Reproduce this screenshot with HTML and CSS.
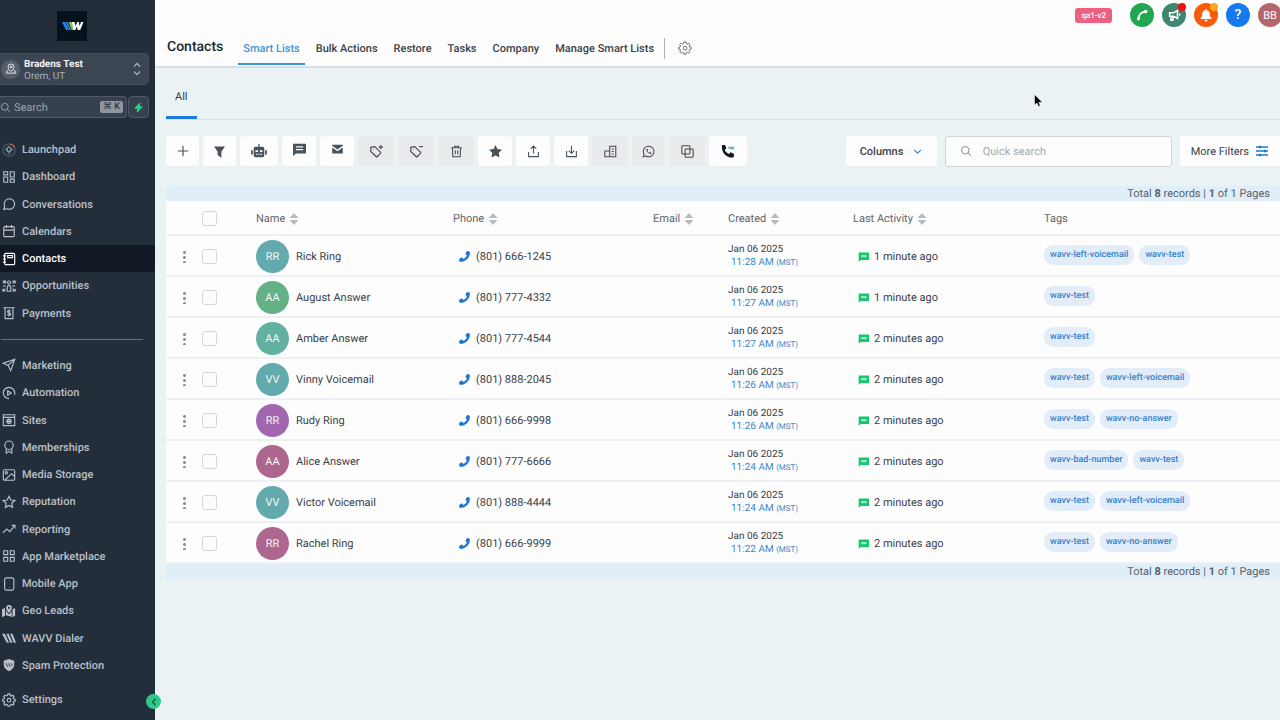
FILE: index.html
```html
<!DOCTYPE html>
<html lang="en">
<head>
<meta charset="utf-8">
<title>Contacts</title>
<link rel="stylesheet" href="styles.css">
</head>
<body>
<svg class="sprite" aria-hidden="true">
  <symbol id="launch" viewBox="0 0 16 16"><circle cx="8" cy="8" r="7" stroke="#4d5b6c"/><path d="M9 1.1A7 7 0 0 1 14.6 5.600" stroke="#c4634a"/><path d="M8 4 4.500 7.500h1.700v2h3.600v-2h1.700zM6.500 11.500h3" stroke="#7f93a8"/></symbol>
  <symbol id="dash" viewBox="0 0 16 16"><path d="M2 2h4.500v3.500H2zM2 8h4.500v6H2zM9.500 2H14v6H9.500zM9.500 10.500H14V14H9.500z"/></symbol>
  <symbol id="chat" viewBox="0 0 16 16"><path d="M8.500 2a6 6 0 1 1-2.700 11.400L2 14.200l1.100-3.600A6 6 0 0 1 8.500 2z"/></symbol>
  <symbol id="cal" viewBox="0 0 16 16"><rect x="2" y="3" width="12" height="11.500" rx="1.500"/><path d="M2 7h12M5 1v3.500M11 1v3.500"/></symbol>
  <symbol id="book" viewBox="0 0 16 16"><rect x="3" y="1.500" width="11.500" height="13" rx="1.500"/><path d="M1 4.500h3.500M1 8h3.500M1 11.500h3.500M6.500 4h5.500v2.500H6.500z"/></symbol>
  <symbol id="people" viewBox="0 0 16 16"><circle cx="8" cy="4" r="1.700"/><path d="M6 14V9.500a2 2 0 0 1 4 0V14zM1 2.500h3v2.500M1 5l3-2.500M15 5V2.500h-3M15 2.500 12 5M1 11v2.500h3M1 13.500 4 11M15 11v2.500h-3M15 13.500 12 11M1 8h3.500M11.500 8H15"/></symbol>
  <symbol id="pay" viewBox="0 0 16 16"><path d="M1.500 2h13M3.500 2v12.500h9V2M9.800 6c-.6-1-3.500-1-3.500.5 0 1.800 3.600 1 3.600 2.800 0 1.400-2.800 1.600-3.800.3M8 4v8"/></symbol>
  <symbol id="send" viewBox="0 0 16 16"><path d="M14.500 1.500 1.500 6l5.500 2.500L10 14.500zM14.500 1.500 7 8.500"/></symbol>
  <symbol id="auto" viewBox="0 0 16 16"><path d="M14.500 8A6.500 6.500 0 1 0 8 14.500M6.500 5.500v5l4-2.500zM14.500 8v2"/></symbol>
  <symbol id="site" viewBox="0 0 16 16"><path d="M1.500 2h13v12.500h-13zM1.500 5h13M5.500 9.500h5M8 7v5"/><circle cx="8" cy="9.500" r="2.500"/></symbol>
  <symbol id="badge" viewBox="0 0 16 16"><circle cx="8" cy="6" r="4.800"/><path d="M4.800 9.600V15L8 13l3.200 2V9.600"/></symbol>
  <symbol id="image" viewBox="0 0 16 16"><rect x="1.500" y="2" width="13" height="12" rx="1.500"/><circle cx="5" cy="5.500" r="1.300"/><path d="m3 14 8-7.500 3.500 3.500"/></symbol>
  <symbol id="star" viewBox="0 0 16 16"><path d="m8 1.500 2 4.200 4.600.6-3.400 3.200.9 4.600L8 11.900l-4.100 2.200.9-4.600L1.400 6.300 6 5.700z"/></symbol>
  <symbol id="trend" viewBox="0 0 16 16"><path d="m1 12.500 4.500-4.500 3.500 3L14.500 4M11 3.800h3.800V7.500"/></symbol>
  <symbol id="grid" viewBox="0 0 16 16"><path d="M2 2h4.500v4.500H2zM9.500 2H14v4.500H9.500zM2 9.500h4.500V14H2zM9.500 9.500H14V14H9.500z"/></symbol>
  <symbol id="mobile" viewBox="0 0 16 16"><rect x="3" y="1" width="10.500" height="14" rx="1.800"/><path d="M8 12h.6"/></symbol>
  <symbol id="geo" viewBox="0 0 16 16"><path stroke="none" fill="currentColor" d="m0 6 3.500-1.500v9L0 15zM4.500 7l2.800 4.500h1.400L11 8v6.500l-6.500-1.700zM12 6l3-1.500v9L12 15zM8 1a3.300 3.300 0 0 0-3.300 3.300C4.700 6.500 8 10.500 8 10.500s3.300-4 3.300-6.200A3.300 3.300 0 0 0 8 1zm0 2a1.300 1.300 0 1 1 0 2.600A1.300 1.300 0 0 1 8 3z"/></symbol>
  <symbol id="wavv" viewBox="0 0 16 16"><path stroke="none" fill="currentColor" d="M0 3h3.300L8 13.500H5.500zM5 3h2.600L12 13.500H9.500zM9.300 3H12l4 10.500h-2.500z"/></symbol>
  <symbol id="shield" viewBox="0 0 16 16"><path stroke="none" fill="currentColor" d="m8 1 6 2v4.500c0 3.500-2.500 6-6 7.500-3.500-1.500-6-4-6-7.500V3z"/><path d="m4.500 6 2 4M7.500 6l2 4M10.500 6l1.300 2.600" stroke="#4a5563"/></symbol>
  <symbol id="gear" viewBox="0 0 16 16"><path d="m6.800 1-.4 1.800-1.300.6-1.600-1L1.900 4l1 1.600-.5 1.200L.8 7.200v2l1.700.4.5 1.200-1 1.600 1.500 1.500 1.600-1 1.300.6.400 1.700h2.200l.4-1.700 1.300-.6 1.600 1 1.500-1.500-1-1.600.5-1.200 1.800-.4v-2l-1.800-.4-.5-1.200 1-1.600-1.500-1.500-1.600 1-1.300-.6L9 1z"/><circle cx="8" cy="8.200" r="2.100"/></symbol>
  <symbol id="search" viewBox="0 0 16 16"><circle cx="7" cy="7" r="5"/><path d="m10.800 10.800 4 4"/></symbol>
  <symbol id="pin" viewBox="0 0 16 16"><path d="M8 11.500S4 8.300 4 5.300a4 4 0 0 1 8 0c0 3-4 6.200-4 6.200zM4.500 10 2 11v2.500h12V11l-2.500-1"/><circle cx="8" cy="5.300" r="1.300"/></symbol>
  <symbol id="phone" viewBox="0 0 16 16"><path stroke="currentColor" stroke-width=".8" fill="currentColor" d="M15.200 1.200 12.300.5c-.4-.1-.7.100-.9.400L9.900 4c-.1.300 0 .7.200.9L12 6.400A11.600 11.600 0 0 1 6.400 12l-1.600-1.900c-.2-.3-.6-.4-.9-.2L.8 11.400c-.3.100-.5.500-.4.900l.8 2.800c.1.300.4.500.7.500A13.500 13.500 0 0 0 15.600 1.900c0-.3-.1-.6-.4-.7z"/></symbol>
  <symbol id="message" viewBox="0 0 16 16"><path stroke="none" fill="currentColor" fill-rule="evenodd" d="M0 1h16v12H3.500L0 16zM3.500 4v1.500h9V4zM3.500 7.500V9h9V7.500z"/></symbol>
  <symbol id="note" viewBox="0 0 16 16"><path stroke="none" fill="#17c671" d="M1 2h15v11H4l-3 2.500z"/><path d="M4.500 6h8v3h-8z" stroke="none" fill="#a4ecc8"/></symbol>
  <symbol id="sort" viewBox="0 0 10 12"><path stroke="none" fill="#b9bcbf" d="M5 0 9.500 5h-9zM5 12 .5 7h9z"/></symbol>
  <symbol id="tag" viewBox="0 0 16 16"><path d="M2 4.500Q1.500 4 2.200 3.800L6.500 3l6.600 6.300q.7.700 0 1.400l-3.600 3.600q-.7.700-1.400 0L2 8.500zM4.700 6.300h.6"/></symbol>
  <symbol id="chev" viewBox="0 0 16 16"><path d="m2 5 6 6 6-6"/></symbol>
</svg>
<div class="app">
  <aside class="sidebar">
    <div class="brand"><svg viewBox="0 0 30 30" role="img" aria-label="WAVV"><path fill="#2f7fe6" d="M5 11h3l4 8H9zM8.500 11h2l4 8h-2z"/><path fill="#7ac943" d="M11.500 11h2.800l3.200 8h-2.700z"/><path fill="#fff" d="M14.500 11h3l1.200 4 1.500-4h1.600l.8 4 1.400-4h2.500l-3.300 8h-2.500l-.9-3.500-1.500 3.500h-1.500z"/></svg></div>
    <button class="account"><span class="place"><svg class="i"><use href="#pin"/></svg></span><span class="who"><b>Bradens Test</b><span>Orem, UT</span></span><svg class="updown" viewBox="0 0 8 14"><path d="m1 4.500 3-3 3 3M1 9.500l3 3 3-3"/></svg></button>
    <div class="find">
      <label class="find-box"><svg class="i"><use href="#search"/></svg><input type="text" placeholder="Search" aria-label="Search"><kbd>⌘ K</kbd></label>
      <button class="bolt" aria-label="Quick actions"><svg viewBox="0 0 10 10"><path d="M6.500 0 .8 5.800h3.400L3.500 10l5.700-5.800H5.800z" fill="#2ecf8b" stroke="#2ecf8b"/></svg></button>
    </div>
    <nav class="menu primary">
      <a href="#"><svg class="i"><use href="#launch"/></svg>Launchpad</a>
      <a href="#"><svg class="i"><use href="#dash"/></svg>Dashboard</a>
      <a href="#"><svg class="i"><use href="#chat"/></svg>Conversations</a>
      <a href="#"><svg class="i"><use href="#cal"/></svg>Calendars</a>
      <a href="#" class="active"><svg class="i"><use href="#book"/></svg>Contacts</a>
      <a href="#"><svg class="i"><use href="#people"/></svg>Opportunities</a>
      <a href="#"><svg class="i"><use href="#pay"/></svg>Payments</a>
    </nav>
    <hr>
    <nav class="menu secondary">
      <a href="#"><svg class="i"><use href="#send"/></svg>Marketing</a>
      <a href="#"><svg class="i"><use href="#auto"/></svg>Automation</a>
      <a href="#"><svg class="i"><use href="#site"/></svg>Sites</a>
      <a href="#"><svg class="i"><use href="#badge"/></svg>Memberships</a>
      <a href="#"><svg class="i"><use href="#image"/></svg>Media Storage</a>
      <a href="#"><svg class="i"><use href="#star"/></svg>Reputation</a>
      <a href="#"><svg class="i"><use href="#trend"/></svg>Reporting</a>
      <a href="#"><svg class="i"><use href="#grid"/></svg>App Marketplace</a>
      <a href="#"><svg class="i"><use href="#mobile"/></svg>Mobile App</a>
      <a href="#"><svg class="i"><use href="#geo"/></svg>Geo Leads</a>
      <a href="#"><svg class="i"><use href="#wavv"/></svg>WAVV Dialer</a>
      <a href="#"><svg class="i"><use href="#shield"/></svg>Spam Protection</a>
    </nav>
    <nav class="menu settings"><a href="#"><svg class="i"><use href="#gear"/></svg>Settings</a></nav>
    <button class="collapse" aria-label="Collapse sidebar"><svg viewBox="0 0 8 8"><path d="M5.500 1 2.500 4l3 3"/></svg></button>
  </aside>
  <main>
    <header class="top">
      <div class="status">
        <span class="env">qa1-v2</span>
        <button class="round call" aria-label="Call"><svg viewBox="0 0 16 16"><path fill="none" stroke="#fff" stroke-width="2" d="M4 12.500C4 7.500 7.500 4 12.500 4"/><path fill="#fff" d="M2.300 10.500h3.400l-.2 3.300-2 .5-1.300-1zM10.500 2.200l3.300.3.500 1.600-.7 1.600-3.100.2z"/></svg></button>
        <button class="round news" aria-label="Announcements"><svg viewBox="0 0 16 16"><path fill="none" stroke="#fff" stroke-width="1.800" d="M3 5.500h4.500L12 3v9L7.500 9.500H3zM4.500 10v4h2.300v-4M14.500 6.500v2"/></svg><i class="dot red"></i></button>
        <button class="round bell" aria-label="Notifications"><svg viewBox="0 0 16 16"><path fill="#fff" d="M8 1.500c.7 0 1.200.5 1.200 1.100 2.200.5 3.200 2.300 3.200 4.400 0 2.500.8 3.500 1.800 4.500v1H1.800v-1c1-1 1.800-2 1.800-4.500 0-2.100 1-3.900 3.200-4.400 0-.6.500-1.100 1.200-1.100zM6.200 13.500h3.600a1.800 1.800 0 0 1-3.600 0z"/></svg><i class="dot amber"></i></button>
        <button class="round help" aria-label="Help">?</button>
        <button class="round me">BB</button>
      </div>
      <div class="titles">
        <h1>Contacts</h1>
        <nav class="sections"><a href="#" class="on">Smart Lists</a><a href="#">Bulk Actions</a><a href="#">Restore</a><a href="#">Tasks</a><a href="#">Company</a><a href="#">Manage Smart Lists</a></nav>
        <button class="cog" aria-label="Contact settings"><svg class="i"><use href="#gear"/></svg></button>
      </div>
    </header>
    <div class="content">
      <nav class="lists"><a href="#">All</a></nav>
      <div class="bar">
        <div class="tools">
          <button aria-label="Add contact"><svg class="i" viewBox="0 0 16 16"><path d="M8 2v12M2 8h12"/></svg></button>
          <button aria-label="Pipeline change"><svg class="i small" viewBox="0 0 16 16"><path fill="currentColor" d="M2.500 2.500h11L9.700 8v6.500L6.300 12V8z"/></svg></button>
          <button class="wide" aria-label="Add to automation"><svg class="robot" viewBox="0 0 18 16"><path fill="currentColor" fill-rule="evenodd" d="M8.300 0h1.400v3H13q2 0 2 2v8q0 2-2 2H5q-2 0-2-2V5q0-2 2-2h3.300zM5 7v2h3V7zm5 0v2h3V7zm-4.500 4.200v1.500H7v-1.500zm2.800 0v1.500h1.500v-1.500zm2.700 0v1.500h1.500v-1.500zM0 7h2v5H1q-1 0-1-1zM16 7h2v4q0 1-1 1h-1z"/></svg></button>
          <button class="mid raised" aria-label="Send SMS"><svg class="i small" viewBox="0 0 16 16"><use href="#message"/></svg></button>
          <button class="mid raised" aria-label="Send email"><svg class="i small" viewBox="0 0 16 16"><path fill="currentColor" stroke="none" d="M1.500 2h13v1.500L8 8 1.500 3.500zM1.500 5.500 8 10l6.500-4.500V13h-13z"/></svg></button>
          <button class="off" aria-label="Add tag"><svg class="i" viewBox="0 0 16 16"><use href="#tag"/><path d="M13.500 1v5M11 3.500h5"/></svg></button>
          <button class="off" aria-label="Remove tag"><svg class="i" viewBox="0 0 16 16"><use href="#tag"/><path d="M11.500 3h4.500"/></svg></button>
          <button class="off" aria-label="Delete"><svg class="i small" viewBox="0 0 16 16"><path d="M1.500 3.500h13M3 3.500l.5 11h9l.5-11M5.500 3.500V1.500h5v2M6.500 6.500v5M9.500 6.500v5"/></svg></button>
          <button class="mid" aria-label="Send review request"><svg class="i small filled" viewBox="0 0 16 16"><use href="#star"/></svg></button>
          <button class="mid" aria-label="Export"><svg class="i small" viewBox="0 0 16 16"><path d="M2 8.500v5.800h12V8.500M8 10.500v-9M4.500 4.800 8 1.300l3.500 3.500"/></svg></button>
          <button class="mid" aria-label="Import"><svg class="i small" viewBox="0 0 16 16"><path d="M2 7.500v6.800h12V7.500M8 1v9M4.500 6.800 8 10.300l3.500-3.500"/></svg></button>
          <button class="off" aria-label="Add to company"><svg class="i small" viewBox="0 0 16 16"><path d="M1 7.500h6v7H1zM7 14.500v-13h7.500v13zM9.500 5h2.500M9.500 8h2.500M9.500 11h2.500"/></svg></button>
          <button class="off plain" aria-label="WhatsApp"><svg class="i small" viewBox="0 0 16 16"><path d="M8.200 1.500a6.500 6.500 0 1 1-3.300 12.100L1.500 14.500l1-3.300A6.500 6.500 0 0 1 8.200 1.500z"/><path d="M5.500 5c-1 2.500 3 6.500 5.500 6l.5-1.500-1.700-.8-.8.800c-1-.3-1.800-1.300-2.200-2.200l.8-.8-.7-1.600z" fill="currentColor" stroke="none"/></svg></button>
          <button class="off" aria-label="Merge"><svg class="i small" viewBox="0 0 16 16"><rect x="1" y="1" width="10" height="10" rx="1"/><rect x="5" y="5" width="10" height="10" rx="1"/></svg></button>
          <button class="wide" aria-label="Call with WAVV"><svg class="i" viewBox="0 0 16 16"><path fill="#111a22" stroke="none" d="M1.500 1h3.200l1.500 4-2 1.500c1 2.300 2.700 4 5 5l1.500-2 4 1.500v3.500q-.5 1-2 1C6 15.500 1 10 1 3q0-1.500.5-2z"/><path stroke="none" fill="#62b7b4" d="M7.500 3H15v4l-2-1.500-1 1-1.500-1.500-1 1z"/></svg></button>
        </div>
        <label class="columns"><select aria-label="Columns"><option>Columns</option></select><svg class="i"><use href="#chev"/></svg></label>
        <label class="quick"><svg class="i"><use href="#search"/></svg><input type="text" placeholder="Quick search" aria-label="Quick search"></label>
        <button class="filters">More Filters<svg viewBox="0 0 14 12"><path d="M1 2h12M1 6h12M1 10h12"/><path class="knob" d="M5 .7v2.600M10 4.700v2.600M5 8.700v2.600"/></svg></button>
      </div>
      <section class="records">
        <p class="total">Total <b>8</b> records | <b>1</b> of 1 Pages</p>
        <table>
          <colgroup><col class="c-menu"><col class="c-check"><col class="c-name"><col class="c-phone"><col class="c-email"><col class="c-created"><col class="c-activity"><col></colgroup>
          <thead><tr><th></th><th><input type="checkbox" aria-label="Select all"></th><th><div class="head">Name<svg class="sort"><use href="#sort"/></svg></div></th><th><div class="head">Phone<svg class="sort"><use href="#sort"/></svg></div></th><th><div class="head">Email<svg class="sort"><use href="#sort"/></svg></div></th><th><div class="head">Created<svg class="sort"><use href="#sort"/></svg></div></th><th><div class="head">Last Activity<svg class="sort"><use href="#sort"/></svg></div></th><th>Tags</th></tr></thead>
          <tbody>
            <tr><td><button class="more" aria-label="Row actions"></button></td><td><input type="checkbox" aria-label="Select Rick Ring"></td><td><div class="person"><span class="avatar teal">RR</span>Rick Ring</div></td><td><div class="tel"><svg class="i"><use href="#phone"/></svg>(801) 666-1245</div></td><td></td><td><div class="date">Jan 06 2025</div><div class="time">11:28 AM <small>(MST)</small></div></td><td><div class="act"><svg class="i"><use href="#note"/></svg>1 minute ago</div></td><td><div class="tags"><span>wavv-left-voicemail</span><span>wavv-test</span></div></td></tr>
            <tr><td><button class="more" aria-label="Row actions"></button></td><td><input type="checkbox" aria-label="Select August Answer"></td><td><div class="person"><span class="avatar green">AA</span>August Answer</div></td><td><div class="tel"><svg class="i"><use href="#phone"/></svg>(801) 777-4332</div></td><td></td><td><div class="date">Jan 06 2025</div><div class="time">11:27 AM <small>(MST)</small></div></td><td><div class="act"><svg class="i"><use href="#note"/></svg>1 minute ago</div></td><td><div class="tags"><span>wavv-test</span></div></td></tr>
            <tr><td><button class="more" aria-label="Row actions"></button></td><td><input type="checkbox" aria-label="Select Amber Answer"></td><td><div class="person"><span class="avatar mint">AA</span>Amber Answer</div></td><td><div class="tel"><svg class="i"><use href="#phone"/></svg>(801) 777-4544</div></td><td></td><td><div class="date">Jan 06 2025</div><div class="time">11:27 AM <small>(MST)</small></div></td><td><div class="act"><svg class="i"><use href="#note"/></svg>2 minutes ago</div></td><td><div class="tags"><span>wavv-test</span></div></td></tr>
            <tr><td><button class="more" aria-label="Row actions"></button></td><td><input type="checkbox" aria-label="Select Vinny Voicemail"></td><td><div class="person"><span class="avatar teal">VV</span>Vinny Voicemail</div></td><td><div class="tel"><svg class="i"><use href="#phone"/></svg>(801) 888-2045</div></td><td></td><td><div class="date">Jan 06 2025</div><div class="time">11:26 AM <small>(MST)</small></div></td><td><div class="act"><svg class="i"><use href="#note"/></svg>2 minutes ago</div></td><td><div class="tags"><span>wavv-test</span><span>wavv-left-voicemail</span></div></td></tr>
            <tr><td><button class="more" aria-label="Row actions"></button></td><td><input type="checkbox" aria-label="Select Rudy Ring"></td><td><div class="person"><span class="avatar purple">RR</span>Rudy Ring</div></td><td><div class="tel"><svg class="i"><use href="#phone"/></svg>(801) 666-9998</div></td><td></td><td><div class="date">Jan 06 2025</div><div class="time">11:26 AM <small>(MST)</small></div></td><td><div class="act"><svg class="i"><use href="#note"/></svg>2 minutes ago</div></td><td><div class="tags"><span>wavv-test</span><span>wavv-no-answer</span></div></td></tr>
            <tr><td><button class="more" aria-label="Row actions"></button></td><td><input type="checkbox" aria-label="Select Alice Answer"></td><td><div class="person"><span class="avatar rose">AA</span>Alice Answer</div></td><td><div class="tel"><svg class="i"><use href="#phone"/></svg>(801) 777-6666</div></td><td></td><td><div class="date">Jan 06 2025</div><div class="time">11:24 AM <small>(MST)</small></div></td><td><div class="act"><svg class="i"><use href="#note"/></svg>2 minutes ago</div></td><td><div class="tags"><span>wavv-bad-number</span><span>wavv-test</span></div></td></tr>
            <tr><td><button class="more" aria-label="Row actions"></button></td><td><input type="checkbox" aria-label="Select Victor Voicemail"></td><td><div class="person"><span class="avatar teal">VV</span>Victor Voicemail</div></td><td><div class="tel"><svg class="i"><use href="#phone"/></svg>(801) 888-4444</div></td><td></td><td><div class="date">Jan 06 2025</div><div class="time">11:24 AM <small>(MST)</small></div></td><td><div class="act"><svg class="i"><use href="#note"/></svg>2 minutes ago</div></td><td><div class="tags"><span>wavv-test</span><span>wavv-left-voicemail</span></div></td></tr>
            <tr><td><button class="more" aria-label="Row actions"></button></td><td><input type="checkbox" aria-label="Select Rachel Ring"></td><td><div class="person"><span class="avatar rose">RR</span>Rachel Ring</div></td><td><div class="tel"><svg class="i"><use href="#phone"/></svg>(801) 666-9999</div></td><td></td><td><div class="date">Jan 06 2025</div><div class="time">11:22 AM <small>(MST)</small></div></td><td><div class="act"><svg class="i"><use href="#note"/></svg>2 minutes ago</div></td><td><div class="tags"><span>wavv-test</span><span>wavv-no-answer</span></div></td></tr>
          </tbody>
        </table>
        <p class="total">Total <b>8</b> records | <b>1</b> of 1 Pages</p>
      </section>
    </div>
  </main>
</div>
<svg class="pointer" viewBox="0 0 9 14" aria-hidden="true"><path d="M.5.500v10.500L3 9l1.500 3.500 1.700-.8L4.800 8.300h3.500z" fill="#000" stroke="#fff" stroke-width=".5"/></svg>
</body>
</html>
```
FILE: styles.css
```css
* { box-sizing: border-box; }
body { margin: 0; font-family: Roboto, "Liberation Sans", sans-serif; font-size: 11px; color: #3b4148; background: #eaf2f4; text-rendering: geometricPrecision; }
button, input, select { font: inherit; color: inherit; margin: 0; padding: 0; border: 0; background: none; text-rendering: inherit; }
a { color: inherit; text-decoration: none; }
svg { display: block; flex: none; }
.sprite { position: absolute; width: 0; height: 0; }
.i { width: 14px; height: 14px; fill: none; stroke: currentColor; stroke-width: 1.3; }
.small { width: 13px; height: 13px; }
.app { display: flex; min-height: 100vh; }

.sidebar { position: relative; flex: none; width: 155px; display: flex; flex-direction: column; background: #242e3b; color: #b9c0ca; padding: 11px 0 7px; }
.brand { width: 30px; height: 30px; margin: 0 auto 12px 57px; background: #04121c; }
.account { display: flex; align-items: center; gap: 4px; height: 32px; margin-right: 6px; padding: 0 7px 0 1px; border: 1px solid #444e5a; border-left: 0; border-radius: 0 5px 5px 0; background: #3c4652; text-align: left; }
.place { display: grid; place-items: center; width: 19px; height: 19px; border-radius: 50%; background: #56606c; color: #e4e8ec; }
.place .i { width: 12px; height: 12px; }
.who { flex: 1; display: grid; padding-top: 3px; font-size: 10px; line-height: 12px; color: #a7aeb8; }
.who b { color: #f3f5f7; font-weight: 700; }
.updown { width: 8px; height: 14px; fill: none; stroke: #a7aeb8; stroke-width: 1.3; }
.find { display: flex; gap: 1px; height: 22px; margin: 11px 6px 18px 0; }
.find-box { flex: 1; min-width: 0; display: flex; align-items: center; gap: 3px; padding-right: 3px; border: 1px solid #505a66; border-left: 0; border-radius: 0 4px 4px 0; background: #37414d; color: #a3abb5; }
.find-box .i { width: 11px; height: 11px; }
.find-box input { flex: 1; width: 0; outline: 0; }
.find-box input::placeholder { color: #9aa2ad; opacity: 1; }
kbd { padding: 0 3px; font: 500 9px/12px Roboto, "DejaVu Sans", sans-serif; color: #29323d; background: #8f969f; border-radius: 2px; }
.bolt { display: grid; place-items: center; width: 21px; border: 1px solid #505a66; border-radius: 4px; background: #37414d; }
.bolt svg { width: 9px; height: 9px; }
.menu { display: flex; flex-direction: column; font-weight: 500; }
.primary { flex: 7 0 auto; }
.secondary { flex: 12 0 auto; }
.menu a { flex: 1 0 auto; display: flex; align-items: center; gap: 6px; min-height: 27px; padding-left: 2px; }
.menu .active { background: #121824; color: #fff; border-radius: 0 2px 2px 0; }
.sidebar hr { width: 142px; height: 1px; margin: 12px 0 12px 1px; border: 0; background: #66717e; }
.settings { margin-top: 7px; }
.collapse { position: absolute; right: -6px; bottom: 11px; display: grid; place-items: center; width: 15px; height: 15px; border-radius: 50%; background: #2cc98a; }
.collapse svg { width: 8px; height: 8px; fill: none; stroke: #17503c; stroke-width: 1.3; }

main { flex: 1; min-width: 0; overflow: hidden; }
.top { background: #fdfdfd; border-bottom: 2px solid #d5dee0; }
.status { display: flex; justify-content: flex-end; align-items: center; gap: 8px; padding-top: 3px; margin-right: -2px; }
.env { margin-right: 10px; padding: 0 6px; font-size: 8px; line-height: 15px; font-weight: 500; color: #fff; background: #ec6080; border-radius: 3px; }
.round { position: relative; display: grid; place-items: center; width: 24px; height: 24px; border-radius: 50%; color: #fff; }
.round svg { width: 14px; height: 14px; }
.call { background: #21a652; }
.news { background: #3e8670; }
.bell { background: #f95b0a; }
.help { background: #1579f0; font-size: 14px; font-weight: 500; }
.me { background: #b4666d; }
.dot { position: absolute; top: 0; right: 0; width: 8px; height: 8px; border-radius: 50%; }
.red { background: #f20d18; }
.amber { background: #fba91a; }
.titles { display: flex; align-items: center; height: 39px; padding-left: 12px; }
h1 { margin: 0 15px 0 0; font-size: 14px; line-height: 20px; font-weight: 500; color: #22272d; }
.sections { display: flex; align-self: stretch; gap: 6px; padding: 0 5px 1px 0; font-weight: 500; }
.sections a { display: flex; align-items: center; padding: 6px 5px 0; border-bottom: 2px solid transparent; }
.sections .on { color: #3c96d2; border-color: #3c96d2; }
.cog { height: 21px; margin-top: 3px; padding-left: 13px; border-left: 1px solid #a9afb3; color: #565d64; }
.cog .i { stroke-width: 1; }

.content { padding-left: 11px; }
.lists { display: flex; border-bottom: 1px solid #d9e1e5; }
.lists a { height: 51px; padding: 22px 9px 0; border-bottom: 3px solid #1f7be2; font-size: 11px; }
.bar { display: flex; align-items: center; height: 30px; margin: 16px 0 20px; }
.tools { display: flex; gap: 4px; height: 100%; margin-right: auto; }
.tools button { display: grid; place-items: center; width: 33px; border-radius: 3px; background: #fdfdfd; color: #46525c; }
.tools .wide { width: 38px; }
.tools .mid { width: 34px; }
.tools .raised { padding-bottom: 3px; }
.tools .off { width: 36px; background: #e9eaeb; color: #454b55; }
.tools .off.plain { width: 33px; }
.robot { width: 16px; height: 14px; }
.filled { fill: currentColor; }
.columns { position: relative; height: 100%; }
.columns select { width: 91px; height: 100%; padding-left: 14px; border-radius: 3px; background: #fdfdfd; appearance: none; font-weight: 500; }
.columns .i { position: absolute; top: 11px; right: 15px; width: 9px; height: 9px; stroke: #2f87cd; stroke-width: 2; pointer-events: none; }
.quick { display: flex; align-items: center; gap: 11px; width: 227px; height: 31px; margin: 0 8px; padding-left: 14px; border: 1px solid #cfd6d9; border-radius: 3px; background: #fdfdfd; color: #838a90; }
.quick .i { width: 12px; height: 12px; }
.quick input { flex: 1; width: 0; outline: 0; }
.quick input::placeholder { color: #a4a9ad; opacity: 1; }
.filters { display: flex; align-items: center; gap: 6px; height: 100%; padding: 0 11px; background: #fdfdfd; border-radius: 3px 0 0 3px; }
.filters svg { width: 14px; height: 12px; fill: none; stroke: #1c7bc7; stroke-width: 1.3; }
.filters .knob { stroke-width: 2; }

.records { background: #fdfdfd; border-radius: 4px 0 0; overflow: hidden; }
.total { margin: 0; padding-right: 10px; background: #e0eef8; text-align: right; line-height: 15px; color: #5a6169; }
table { width: 100%; table-layout: fixed; border-collapse: separate; border-spacing: 0; }
.c-menu { width: 36px; }
.c-check { width: 54px; }
.c-name { width: 197px; }
.c-phone { width: 200px; }
.c-email { width: 75px; }
.c-created { width: 125px; }
.c-activity { width: 191px; }
th, td { padding: 1px 0 0; text-align: left; white-space: nowrap; border-bottom: 2px solid #edf1f3; }
th { height: 35px; padding-top: 2px; font-weight: 400; color: #5f666d; }
td { height: 41px; }
.head { display: flex; align-items: center; gap: 4px; }
.sort { width: 10px; height: 12px; }
input[type="checkbox"] { display: block; width: 15px; height: 15px; appearance: none; border: 1px solid #d4d7d9; border-radius: 3px; }
.more { display: block; width: 3px; height: 13px; margin-left: 17px; background: radial-gradient(circle, #8b9196 1px, transparent 2px) 0 0 / 3px 5px; }
.person { gap: 7px; }
.person, .tel, .act, .tags { display: flex; align-items: center; }
.avatar { display: grid; place-items: center; width: 33px; height: 33px; border-radius: 50%; color: #f2f7f7; }
.teal { background: #63aaae; }
.green { background: #63b184; }
.mint { background: #62b1a0; }
.purple { background: #a265b0; }
.rose { background: #ad668e; }
.tel { gap: 6px; padding-left: 6px; }
.tel .i { width: 11px; height: 11px; color: #1d75ce; }
.act { gap: 5px; padding-left: 5px; }
.act .i { width: 11px; height: 11px; }
.date, .time { font-size: 10px; line-height: 13px; }
.time { padding-left: 3px; color: #3f86c8; }
.time small { font-size: 8px; }
.tags { gap: 5px; padding-bottom: 3px; }
.tags span { padding: 0 6px; font-size: 9px; line-height: 20px; font-weight: 500; color: #3580cb; background: #e2edf9; border-radius: 9px; }
.pointer { position: absolute; left: 1034px; top: 94px; width: 9px; height: 14px; }
```
